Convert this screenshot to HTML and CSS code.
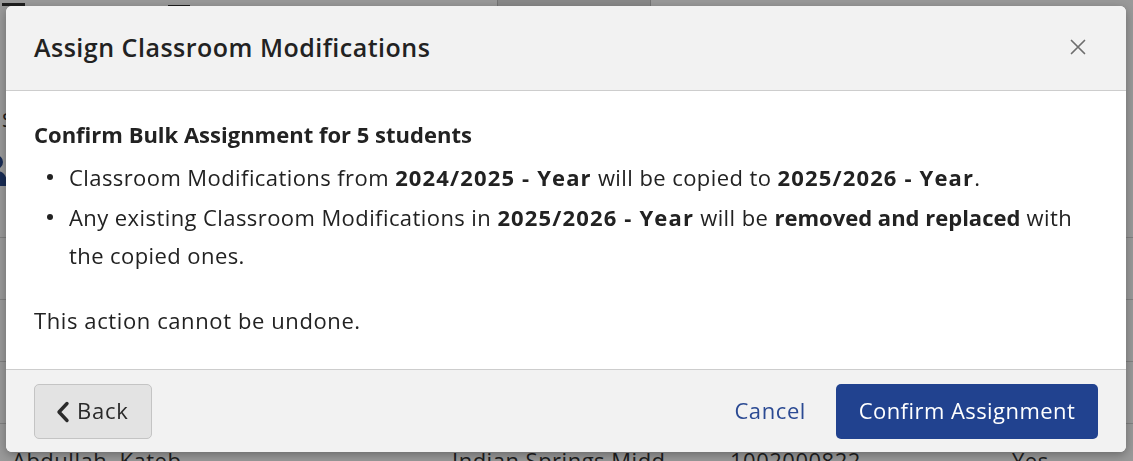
FILE: index.html
```html
<!DOCTYPE html>
<html lang="en">
<head>
<meta charset="utf-8">
<title>Assign Classroom Modifications</title>
<link rel="stylesheet" href="styles.css">
</head>
<body>
<div class="page">
  <div class="topbar">
    <span class="tb-icon"></span>
    <span class="tb-icon2"></span>
    <span class="tb-tab"></span>
  </div>
  <div class="page-top">
    <span class="side-label">S</span>
    <svg class="side-person" width="22" height="32" viewBox="0 0 22 32"><circle cx="11" cy="8" r="7" fill="#2a4a8c"/><path d="M0 32 C0 20 4 17 11 17 C18 17 22 20 22 32 Z" fill="#2a4a8c"/></svg>
  </div>
  <div class="page-row"></div>
  <div class="page-row"></div>
  <div class="page-row"></div>
  <div class="page-row data-row">
    <span class="c1">Abdullah, Kateb</span>
    <span class="c2">Indian Springs Midd</span>
    <span class="c3">1002000822</span>
    <span class="c4">Yes</span>
  </div>
</div>
<div class="overlay"></div>
<div class="modal" role="dialog">
  <div class="modal-header">
    <h2 class="modal-title">Assign Classroom Modifications</h2>
    <button class="close-btn" aria-label="Close">
      <svg width="16" height="16" viewBox="0 0 16 16"><path d="M1.5 1.5 L14.5 14.5 M14.5 1.5 L1.5 14.5" stroke="#6e6e6e" stroke-width="1.7" stroke-linecap="round"/></svg>
    </button>
  </div>
  <div class="modal-body">
    <h3 class="confirm-heading">Confirm Bulk Assignment for 5 students</h3>
    <ul class="confirm-list">
      <li>Classroom Modifications from <strong class="yr">2024/2025 - Year</strong> will be copied to <strong class="yr">2025/2026 - Year</strong>.</li>
      <li>Any existing Classroom Modifications in <strong class="yr">2025/2026 - Year</strong> will be <strong>removed and replaced</strong> with the copied ones.</li>
    </ul>
    <p class="warning">This action cannot be undone.</p>
  </div>
  <div class="modal-footer">
    <button class="btn-back">
      <svg width="14" height="22" viewBox="0 0 14 22"><path d="M11 2.5 L3 11 L11 19.5" fill="none" stroke="#2b2b2b" stroke-width="3.4" stroke-linecap="round" stroke-linejoin="round"/></svg>
      <span>Back</span>
    </button>
    <div class="footer-actions">
      <button class="btn-cancel">Cancel</button>
      <button class="btn-confirm">Confirm Assignment</button>
    </div>
  </div>
</div>
</body>
</html>
```
FILE: styles.css
```css
html, body {
  margin: 0;
  width: 1133px;
  height: 461px;
  overflow: hidden;
}
body {
  position: relative;
  background: #fff;
  color: #222;
  font-family: "Open Sans", "Liberation Sans", sans-serif;
}

/* background page */
.page {
  height: 461px;
  display: flex;
  flex-direction: column;
  overflow: hidden;
}
.topbar {
  height: 8px;
  flex: none;
  display: flex;
  align-items: flex-start;
}
.tb-icon {
  margin: 3px 0 0 2px;
  width: 23px;
  height: 3px;
  background: #333;
  flex: none;
}
.tb-icon2 {
  margin: 5px 0 0 143px;
  width: 22px;
  height: 2px;
  background: #333;
  flex: none;
}
.tb-tab {
  margin-left: 307px;
  width: 152px;
  height: 8px;
  background: #e4e4e4;
  border-left: 1px solid #c4c4c4;
  border-right: 1px solid #c4c4c4;
  flex: none;
}
.page-top {
  height: 229px;
  flex: none;
  display: flex;
  flex-direction: column;
  border-bottom: 1px solid #d6d6d6;
}
.side-label {
  margin: 100px 0 0 2px;
  font-size: 20px;
  line-height: 24px;
  color: #333;
}
.side-person {
  margin: 22px 0 0 -15px;
}
.page-row {
  height: 61px;
  flex: none;
  border-bottom: 1px solid #d6d6d6;
}
.data-row {
  display: flex;
  border-bottom: none;
  font-size: 22px;
  line-height: 30px;
  letter-spacing: 0.5px;
  color: #333;
  padding-top: 21px;
  box-sizing: border-box;
}
.data-row span { flex: none; white-space: nowrap; }
.c1 { margin-left: 12px; width: 440px; }
.c2 { width: 278px; }
.c3 { width: 282px; }

.overlay {
  position: fixed;
  inset: 0;
  background: rgba(0, 0, 0, 0.4);
}

/* modal */
.modal {
  position: absolute;
  left: 6px;
  top: 6px;
  width: 1120px;
  height: 446px;
  background: #fff;
  border-radius: 6px;
  box-shadow: 0 3px 10px rgba(0, 0, 0, 0.3);
  display: flex;
  flex-direction: column;
  overflow: hidden;
}
.modal-header {
  height: 85px;
  flex: none;
  box-sizing: border-box;
  background: #f2f2f2;
  border-bottom: 1px solid #cdcdcd;
  display: flex;
  align-items: center;
  justify-content: space-between;
  padding: 0 40px 2px 28px;
}
.modal-title {
  margin: 0;
  font-size: 25px;
  font-weight: 600;
  line-height: 32px;
  letter-spacing: 0.5px;
  color: #222;
}
.close-btn {
  border: 0;
  background: none;
  padding: 0;
  width: 16px;
  height: 16px;
  display: flex;
}
.modal-body {
  flex: 1;
  padding: 28px 28px 0;
}
.confirm-heading {
  margin: 0;
  font-size: 22px;
  font-weight: 700;
  line-height: 30px;
}
.confirm-list {
  list-style: none;
  margin: 9px 0 0;
  padding: 0;
  max-width: 1060px;
}
.confirm-list li {
  position: relative;
  padding-left: 35px;
  font-size: 22px;
  line-height: 38px;
  letter-spacing: 0.42px;
  margin-bottom: 2px;
}
.confirm-list li::before {
  content: "";
  position: absolute;
  left: 13px;
  top: 16px;
  width: 6px;
  height: 6px;
  border-radius: 50%;
  background: #222;
}
.confirm-list strong {
  font-weight: 700;
  letter-spacing: 0;
}
.confirm-list strong.yr { letter-spacing: 1.15px; }
.warning {
  margin: 27px 0 0;
  font-size: 22px;
  line-height: 38px;
  letter-spacing: 0.6px;
}
.modal-footer {
  height: 83px;
  flex: none;
  box-sizing: border-box;
  background: #f2f2f2;
  border-top: 1px solid #cdcdcd;
  display: flex;
  align-items: flex-start;
  justify-content: space-between;
  padding: 14px 28px 0;
}
.btn-back {
  width: 118px;
  height: 55px;
  box-sizing: border-box;
  background: #e3e3e3;
  border: 1px solid #c4c4c4;
  border-radius: 5px;
  display: flex;
  align-items: center;
  gap: 7px;
  padding: 0 0 3px 21px;
  font-family: inherit;
  font-size: 22px;
  letter-spacing: 0.8px;
  color: #2a2a2a;
}
.btn-back svg { margin-top: 3px; }
.footer-actions {
  display: flex;
  align-items: center;
  gap: 30px;
}
.btn-cancel {
  border: 0;
  background: none;
  padding: 0 0 3px;
  height: 55px;
  font-family: inherit;
  font-size: 22px;
  letter-spacing: 0.6px;
  color: #2b4a93;
}
.btn-confirm {
  width: 262px;
  height: 55px;
  border: 0;
  border-radius: 5px;
  background: #21428f;
  color: #fff;
  font-family: inherit;
  font-size: 22px;
  letter-spacing: 0.45px;
  padding: 0 0 3px;
}
```
